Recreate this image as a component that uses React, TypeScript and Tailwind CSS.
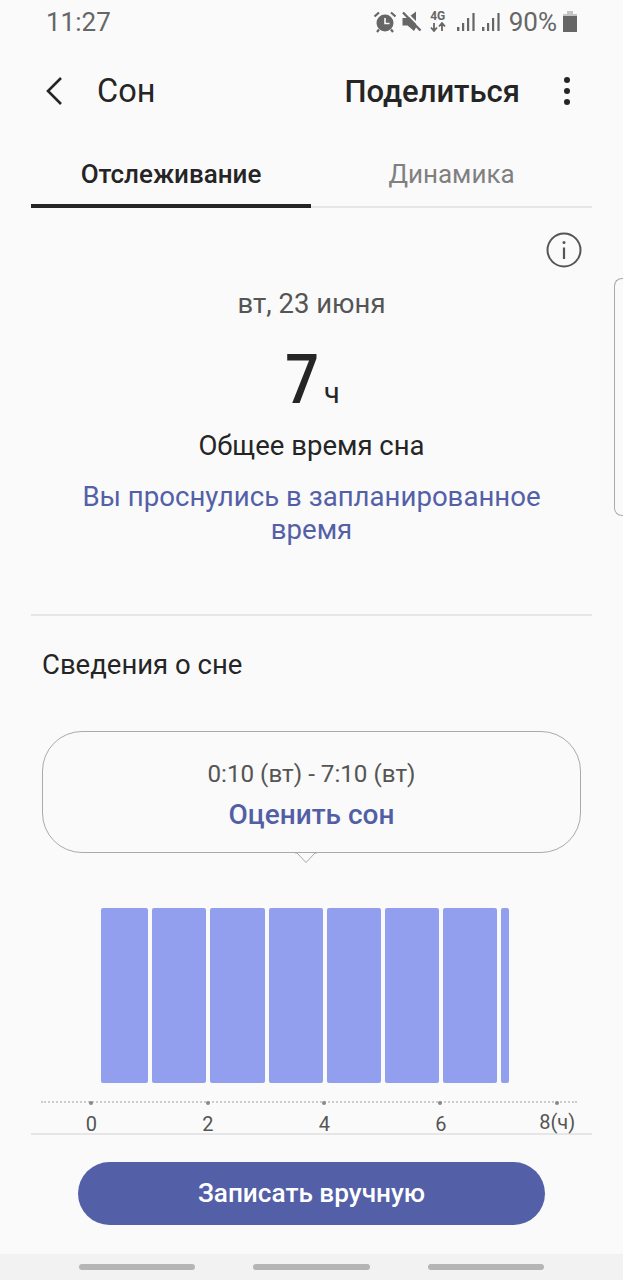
const font = { fontFamily: 'Roboto, sans-serif' };

const bars = ['w-[46.8px]', 'w-[54.2px]', 'w-[54.2px]', 'w-[54.2px]', 'w-[54.2px]', 'w-[54.2px]', 'w-[54.2px]', 'w-[8px]'];
const ticks = ['0', '2', '4', '6'];

function SignalBars({ className }: { className: string }) {
  return (
    <svg className={className} width="18" height="20" viewBox="0 0 18 20" fill="#666">
      <rect x="0" y="15" width="2.4" height="4" />
      <rect x="5" y="11" width="2.2" height="8" />
      <rect x="10" y="6" width="2.2" height="13" />
      <rect x="15.4" y="1" width="2.2" height="18" />
    </svg>
  );
}

function StatusIcons() {
  return (
    <div className="flex items-center text-[#666]">
      {/* alarm */}
      <svg width="22" height="22" viewBox="0 0 22 22" fill="none">
        <circle cx="11" cy="12" r="8.5" fill="#666" />
        <path d="M11 7V12.5H15.5" stroke="#fafafa" strokeWidth="1.6" />
        <path d="M0.5 5.5L5 1.5M21.5 5.5L17 1.5M5 18.5L3 21M17 18.5L19 21" stroke="#666" strokeWidth="2.2" />
      </svg>
      {/* muted speaker */}
      <svg className="ml-[6px]" width="20" height="22" viewBox="0 0 20 22" fill="none">
        <path d="M0.5 7H5.5L14 0.5V16.5L12 20L5.5 14.5H0.5Z" fill="#666" />
        <path d="M3 0.5L20 17.5" stroke="#fafafa" strokeWidth="2" />
        <path d="M1 1.5L18.5 19.5" stroke="#666" strokeWidth="2.4" />
      </svg>
      {/* 4G */}
      <div className="ml-[8px] flex w-[16px] flex-col items-center">
        <span className="text-[12px] leading-[11px] font-bold">4G</span>
        <svg width="16" height="10" viewBox="0 0 16 10" fill="none">
          <path d="M4 1V8M1 5.5L4 9L7 5.5M12 9V2M9 4.5L12 1L15 4.5" stroke="#666" strokeWidth="1.8" />
        </svg>
      </div>
      <SignalBars className="ml-[11px]" />
      <SignalBars className="ml-[7px]" />
      <span className="ml-[9px] text-[26px] leading-none">90%</span>
      <svg className="ml-[6px]" width="14" height="21" viewBox="0 0 14 21">
        <path d="M4 0H10V3H14V21H0V3H4Z" fill="#c4c4c4" />
        <rect x="0" y="5" width="14" height="16" fill="#666" />
      </svg>
    </div>
  );
}

export default function App() {
  return (
    <div className="relative flex h-[1280px] w-[623px] flex-col overflow-hidden bg-[#fafafa]" style={font}>
      <div className="flex h-[43px] items-center justify-between pr-[46px] pl-[46px] text-[#666]">
        <span className="text-[26px] leading-none">11:27</span>
        <StatusIcons />
      </div>

      <header className="flex h-[96px] items-center pr-[53px] pl-[44px]">
        <svg width="20" height="30" viewBox="0 0 20 30" fill="none">
          <path d="M17 2L4 15L17 28" stroke="#252525" strokeWidth="2.6" />
        </svg>
        <h1 className="ml-[33px] text-[32.5px] leading-none text-[#252525]">Сон</h1>
        <span className="ml-auto text-[31px] leading-none font-medium text-[#252525]">Поделиться</span>
        <div className="ml-[44px] flex flex-col gap-[5px]">
          <span className="size-[6px] rounded-full bg-[#252525]" />
          <span className="size-[6px] rounded-full bg-[#252525]" />
          <span className="size-[6px] rounded-full bg-[#252525]" />
        </div>
      </header>

      <nav className="mx-[31px] flex h-[69px] border-b-[2px] border-[#e6e6e6]">
        <div className="-mb-[2px] flex w-[280px] items-center justify-center border-b-[4px] border-[#252525] pt-[5px] text-[26px] font-medium text-[#252525]">
          Отслеживание
        </div>
        <div className="flex flex-1 items-center justify-center pt-[3px] text-[26px] text-[#808080]">
          Динамика
        </div>
      </nav>

      <div className="flex justify-end pt-[24px] pr-[41px]">
        <svg width="36" height="36" viewBox="0 0 36 36" fill="none">
          <circle cx="18" cy="18" r="16.5" stroke="#555" strokeWidth="2" />
          <circle cx="18" cy="10.5" r="1.5" fill="#555" />
          <path d="M18 15.5V27" stroke="#555" strokeWidth="2.2" />
        </svg>
      </div>

      <section className="flex flex-col items-center">
        <p className="mt-[21px] text-[27.5px] leading-[30px] text-[#555]">вт, 23 июня</p>
        <p className="mt-[20px] flex h-[72px] items-baseline gap-[9px] pt-[5px] text-[#252525]">
          <span className="inline-block w-[32px] scale-x-[0.86] text-center text-[69px] leading-[72px] font-medium">7</span>
          <span className="text-[29px] leading-[30px]">ч</span>
        </p>
        <p className="mt-[20px] text-[27.5px] leading-[30px] text-[#252525]">Общее время сна</p>
        <p className="mt-[19px] w-[500px] text-center text-[27.6px] leading-[33px] text-[#5360a8]">
          Вы проснулись в запланированное время
        </p>
      </section>

      <div className="mx-[31px] mt-[68px] h-[2px] bg-[#e6e6e6]" />

      <h2 className="mt-[34px] ml-[42px] text-[27.5px] leading-[30px] text-[#252525]">Сведения о сне</h2>

      <div className="relative mt-[51px] ml-[42px] flex h-[122px] w-[539px] flex-col items-center rounded-[40px] border border-[#aaa]">
        <p className="mt-[28px] text-[24.2px] leading-[28px] text-[#555]">0:10 (вт) - 7:10 (вт)</p>
        <p className="mt-[12px] text-[28px] leading-[30px] font-medium text-[#525fa6]">Оценить сон</p>
        <svg className="absolute top-[120px] left-[252px]" width="22" height="12" viewBox="0 0 22 12" fill="none">
          <path d="M0 1H2L11 10.5L20 1H22" fill="#fafafa" stroke="#aaa" strokeWidth="1" />
        </svg>
      </div>

      <div className="mt-[55px] ml-[101.4px] flex h-[174.5px] gap-[4px]">
        {bars.map((w, i) => (
          <div key={i} className={`${w} rounded-[2px] bg-[#929fef]`} />
        ))}
      </div>

      <div className="mx-[31px] mt-[17.5px] flex h-[35px] flex-col border-b-[2px] border-[#e6e6e6]">
        <div className="relative mx-[10px] mt-[1px] h-0 w-[536px] border-t-[2px] border-dotted border-[#ccc]">
          {[50, 167, 283, 399, 516].map((x) => (
            <span key={x} className="absolute -top-[2.5px] size-[4px] rounded-full bg-[#888]" style={{ left: x - 2 }} />
          ))}
        </div>
        <div className="mt-[10px] ml-[2px] flex text-[20px] leading-[22px] text-[#555]">
          {ticks.map((t) => (
            <span key={t} className="w-[116.5px] shrink-0 text-center">
              {t}
            </span>
          ))}
          <span className="-mt-[2px] w-[116.5px] shrink-0 text-center">8(ч)</span>
        </div>
      </div>

      <button className="mx-[78px] mt-[27px] h-[63px] shrink-0 rounded-full bg-[#5360a8] text-[26.2px] font-medium text-white">
        Записать вручную
      </button>

      <div className="mt-[29px] flex flex-1 items-start justify-between bg-[#f2f2f2] px-[79px] pt-[10px]">
        <span className="h-[6px] w-[116px] rounded-full bg-[#b5b5b5]" />
        <span className="h-[6px] w-[117px] rounded-full bg-[#b5b5b5]" />
        <span className="h-[6px] w-[116px] rounded-full bg-[#b5b5b5]" />
      </div>

      {/* edge panel handle */}
      <div className="absolute top-[278px] right-0 h-[238px] w-[9px] rounded-l-[8px] border-y border-l border-[#aaa]" />
    </div>
  );
}
